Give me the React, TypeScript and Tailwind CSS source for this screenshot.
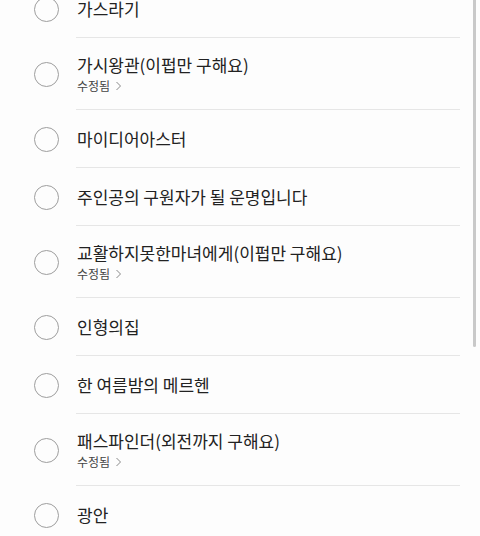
import React from "react";

interface Item {
  title: string;
  edited?: boolean;
}

const items: Item[] = [
  { title: "가스라기" },
  { title: "가시왕관(이펍만 구해요)", edited: true },
  { title: "마이디어아스터" },
  { title: "주인공의 구원자가 될 운명입니다" },
  { title: "교활하지못한마녀에게(이펍만 구해요)", edited: true },
  { title: "인형의집" },
  { title: "한 여름밤의 메르헨" },
  { title: "패스파인더(외전까지 구해요)", edited: true },
  { title: "광안" },
];

const Row = ({ item, last }: { item: Item; last: boolean }) => (
  <li className="flex items-stretch">
    <div className="w-[76px] flex items-center pl-[34px] shrink-0">
      <span className="w-[25px] h-[25px] rounded-full border-[1.5px] border-[#9e9e9e]" />
    </div>
    <div
      className={
        "flex-1 mr-[20px] flex flex-col justify-center " +
        (item.edited ? "h-[72px] " : "h-[58px] ") +
        (last ? "" : "border-b border-[#e6e6e6]")
      }
    >
      <span className="text-[17px] leading-[22px] text-[#222] pl-[1px]">{item.title}</span>
      {item.edited && (
        <span className="flex items-center gap-[5px] text-[12px] leading-[16px] text-[#444] pl-[1px] mt-[2px]">
          수정됨
          <svg width="7" height="10" viewBox="0 0 7 10" fill="none">
            <path d="M1.5 1l4 4-4 4" stroke="#8a8a8a" strokeWidth="1" />
          </svg>
        </span>
      )}
    </div>
  </li>
);

export default function App() {
  return (
    <div
      className="relative w-[480px] h-[536px] overflow-hidden bg-[#fdfdfd]"
      style={{ fontFamily: '"Noto Sans CJK KR", "Noto Sans", sans-serif' }}
    >
      <ul className="-mt-[20px]">
        {items.map((it, i) => (
          <Row key={i} item={it} last={i === items.length - 1} />
        ))}
      </ul>
      <div className="absolute right-[4px] top-0 w-[3px] h-[347px] bg-[#c9c9c9] rounded-b-sm" />
    </div>
  );
}
